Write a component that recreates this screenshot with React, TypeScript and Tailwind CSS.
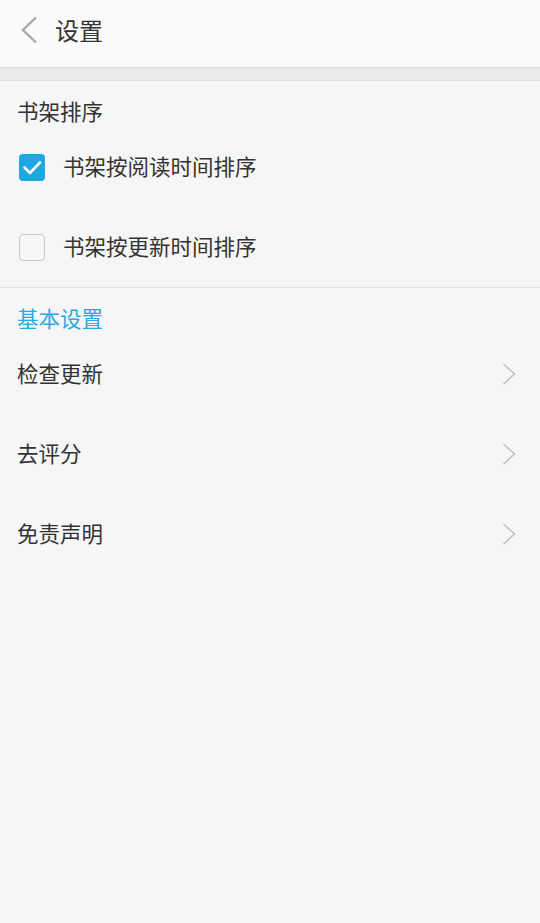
import React from "react";

const font = { fontFamily: '"Noto Sans CJK SC", "Noto Sans", sans-serif' };

function ChevronRight() {
  return (
    <svg width="14" height="22" viewBox="0 0 14 22" fill="none">
      <path d="M1.5 1 L12.5 11 L1.5 21" stroke="#c4c4c4" strokeWidth="1.6" strokeLinejoin="miter" />
    </svg>
  );
}

function CheckRow({ checked, label }: { checked: boolean; label: string }) {
  return (
    <div className="flex h-[80px] items-center pl-[19px]">
      {checked ? (
        <div className="flex h-[27px] w-[26px] items-center justify-center rounded-[4px] bg-[#1ea8e2]">
          <svg width="26" height="27" viewBox="0 0 26 27" fill="none">
            <path d="M5.5 13.5 L11 19 L21 8.5" stroke="#ffffff" strokeWidth="2.6" strokeLinecap="round" strokeLinejoin="round" />
          </svg>
        </div>
      ) : (
        <div className="h-[27px] w-[26px] rounded-[4px] border border-[#c6c6c6] bg-[#f7f7f7]" />
      )}
      <span className="mb-[4px] ml-[18px] text-[21.5px] leading-[29px] text-[#333333]">{label}</span>
    </div>
  );
}

function LinkRow({ label }: { label: string }) {
  return (
    <div className="flex h-[80px] items-center justify-between pl-[17px] pr-[24px]">
      <span className="mb-[4px] text-[21.5px] leading-[29px] text-[#333333]">{label}</span>
      <ChevronRight />
    </div>
  );
}

export default function App() {
  return (
    <div className="min-h-[923px] w-[540px] bg-[#f6f6f6]" style={font}>
      <div className="flex h-[68px] items-center border-b border-[#dcdcdc] bg-[#fafafa] pb-[7px]">
        <div className="ml-[19px] mr-[16px] flex items-center">
          <svg width="20" height="28" viewBox="0 0 20 28" fill="none">
            <path d="M17 1.5 L4 14 L17 26.5" stroke="#a8a8a8" strokeWidth="2.4" />
          </svg>
        </div>
        <span className="text-[24px] leading-[32px] text-[#333333]">设置</span>
      </div>
      <div className="h-[13px] border-b border-[#e2e2e2] bg-[#ebebeb]" />
      <div className="pb-[2px] pl-[17px] pt-[15px] text-[21.5px] leading-[29px] text-[#333333]">书架排序</div>
      <CheckRow checked label="书架按阅读时间排序" />
      <CheckRow checked={false} label="书架按更新时间排序" />
      <div className="h-px bg-[#e4e4e4]" />
      <div className="pb-[2px] pl-[17px] pt-[15px] text-[21.5px] leading-[29px] text-[#2aa8df]">基本设置</div>
      <LinkRow label="检查更新" />
      <LinkRow label="去评分" />
      <LinkRow label="免责声明" />
    </div>
  );
}
